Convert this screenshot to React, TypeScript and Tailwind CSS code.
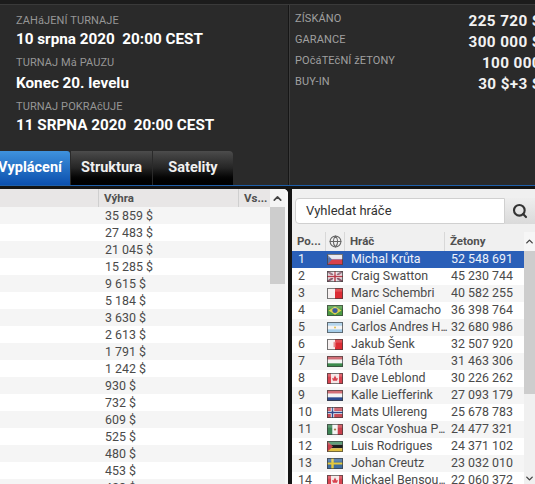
import { Globe, Search, ChevronUp, ChevronDown } from "lucide-react";
import type { ReactNode } from "react";

const prizes = ["35 859 $","27 483 $","21 045 $","15 285 $","9 615 $","5 184 $","3 630 $","2 613 $","1 791 $","1 242 $","930 $","732 $","609 $","525 $","480 $","453 $","428 $"];

function Frame({ children }: { children: ReactNode }) {
  return (
    <svg width="16" height="11" viewBox="0 0 16 12" preserveAspectRatio="none" className="block">
      {children}
      <rect x="0" y="0" width="16" height="4" fill="#ffffff" opacity="0.18" />
      <rect x="0.5" y="0.5" width="15" height="11" fill="none" stroke="#3a3a3a" strokeOpacity="0.7" />
    </svg>
  );
}

const flags: Record<string, ReactNode> = {
  cz: <Frame><rect width="16" height="6" fill="#e4e4ee" /><rect y="6" width="16" height="6" fill="#d8404c" /><path d="M0 0L5 6L0 12Z" fill="#5a74aa" /></Frame>,
  gb: <Frame><rect width="16" height="12" fill="#d8d0d6" /><path d="M0 0L16 12M16 0L0 12" stroke="#8a5a6c" strokeWidth="2" /><path d="M8 0V12M0 6H16" stroke="#f4eef0" strokeWidth="3.4" /><path d="M8 0V12M0 6H16" stroke="#b83c4c" strokeWidth="1.5" /></Frame>,
  mt: <Frame><rect width="16" height="12" fill="#f6f0f0" /><rect x="8" width="8" height="12" fill="#dc2c34" /></Frame>,
  br: <Frame><rect width="16" height="12" fill="#4c9a44" /><path d="M8 1.5L14.5 6L8 10.5L1.5 6Z" fill="#e0d050" /><circle cx="8" cy="6" r="2.6" fill="#3c5c9c" /></Frame>,
  ar: <Frame><rect width="16" height="12" fill="#f4f4f4" /><rect width="16" height="4" fill="#a4cce8" /><rect y="8" width="16" height="4" fill="#a4cce8" /><circle cx="8" cy="6" r="1" fill="#e0c050" /></Frame>,
  pe: <Frame><rect width="16" height="12" fill="#f6f0f0" /><rect x="8" width="8" height="12" fill="#dc2c34" /><rect x="6.5" y="3" width="2" height="6" fill="#e88a8a" /></Frame>,
  hu: <Frame><rect width="16" height="4" fill="#c8505a" /><rect y="4" width="16" height="4" fill="#f4f4f4" /><rect y="8" width="16" height="4" fill="#3c8a4c" /></Frame>,
  ca: <Frame><rect width="16" height="12" fill="#f4e6e6" /><rect width="4" height="12" fill="#d84450" /><rect x="12" width="4" height="12" fill="#d84450" /><path d="M8 2.5L9.5 6L11 5.5L10 8.5H6L5 5.5L6.5 6Z" fill="#d84450" /></Frame>,
  nl: <Frame><rect width="16" height="4" fill="#c8505a" /><rect y="4" width="16" height="4" fill="#f4f4f4" /><rect y="8" width="16" height="4" fill="#2c4a90" /></Frame>,
  no: <Frame><rect width="16" height="12" fill="#c84c58" /><path d="M5.5 0V12M0 6H16" stroke="#f4f4f4" strokeWidth="3.4" /><path d="M5.5 0V12M0 6H16" stroke="#34488c" strokeWidth="1.5" /></Frame>,
  mx: <Frame><rect width="16" height="12" fill="#f4f4f4" /><rect width="5.3" height="12" fill="#3c8454" /><rect x="10.7" width="5.3" height="12" fill="#c8404c" /><circle cx="8" cy="6" r="1.2" fill="#a08050" /></Frame>,
  mz: <Frame><rect width="16" height="4" fill="#3c8a5c" /><rect y="4" width="16" height="4" fill="#1c1c1c" /><rect y="8" width="16" height="4" fill="#e0c040" /><path d="M0 0L6 6L0 12Z" fill="#c8404c" /></Frame>,
  se: <Frame><rect width="16" height="12" fill="#3c6ca0" /><path d="M5.5 0V12M0 6H16" stroke="#e4c83c" strokeWidth="2.4" /></Frame>,
};

const players: [string, string, string, boolean?][] = [
  ["Michal Krůta","cz","52 548 691"],
  ["Craig Swatton","gb","45 230 744"],
  ["Marc Schembri","mt","40 582 255"],
  ["Daniel Camacho","br","36 398 764"],
  ["Carlos Andres H","ar","32 680 986",true],
  ["Jakub Šenk","pe","32 507 920"],
  ["Béla Tóth","hu","31 463 306"],
  ["Dave Leblond","ca","30 226 262"],
  ["Kalle Liefferink","nl","27 093 179"],
  ["Mats Ullereng","no","25 678 783"],
  ["Oscar Yoshua P","mx","24 477 321",true],
  ["Luis Rodrigues","mz","24 371 102"],
  ["Johan Creutz","se","23 032 010"],
  ["Mickael Bensou","ca","22 060 372",true],
];

function Label({ children }: { children: ReactNode }) {
  return <div className="h-[19px] text-[11px] font-normal leading-[19px] tracking-[0.1px] text-[#969696]">{children}</div>;
}

function Stat({ label, value }: { label: string; value: string }) {
  return (
    <div className="flex h-[21px] items-center justify-between">
      <span className="pb-[4px] text-[11px] tracking-[0.1px] text-[#a0a0a0]">{label}</span>
      <span className="text-[15.25px] font-bold tracking-[0.4px] text-[#f2f2f2]">{value}</span>
    </div>
  );
}

export default function App() {
  return (
    <div className="flex h-[484px] w-[535px] flex-col overflow-hidden bg-[#141414] font-['Roboto',sans-serif]">
      <div className="h-[4px] shrink-0 bg-[#1c1c1c]" />
      <div className="flex h-[181px] shrink-0 border-t border-[#3a3a3a] bg-[#2a2a2a]">
        <div className="flex w-[289px] shrink-0 flex-col justify-between border-r border-[#161616]">
          <div className="flex flex-col pl-[16px] pt-[6px] text-[15.25px] font-bold text-white">
            <Label>ZAHáJENÍ TURNAJE</Label>
            <div className="mb-[4px] whitespace-pre leading-[19px]">10 srpna 2020  20:00 CEST</div>
            <Label>TURNAJ Má PAUZU</Label>
            <div className="mb-[2px] whitespace-pre leading-[23px]">Konec 20. levelu</div>
            <Label>TURNAJ POKRAčUJE</Label>
            <div className="whitespace-pre leading-[19px]">11 SRPNA 2020  20:00 CEST</div>
          </div>
          <div className="flex h-[34px] items-stretch text-[14.5px] font-bold text-[#f0f0f0]">
            <div className="flex w-[70px] items-center justify-end overflow-hidden rounded-tr-[3px] bg-gradient-to-b from-[#3f92dc] to-[#0b4fae] pr-[8px] text-white">
              <span className="whitespace-nowrap">Vyplácení</span>
            </div>
            <div className="ml-[1px] flex w-[81px] items-center justify-center bg-gradient-to-b from-[#4c4c4c] via-[#252525] to-[#000000]">Struktura</div>
            <div className="ml-[1px] flex w-[80px] items-center justify-center rounded-tr-[4px] bg-gradient-to-b from-[#4c4c4c] via-[#252525] to-[#000000]">Satelity</div>
          </div>
        </div>
        <div className="min-w-0 flex-1 overflow-hidden border-l border-[#3c3c3c] pt-[6px]">
          <div className="ml-[5px] mr-[-6px] flex flex-col">
            <Stat label="ZÍSKÁNO" value="225 720 $" />
            <Stat label="GARANCE" value="300 000 $" />
            <Stat label="POčáTEčNÍ žETONY" value="100 000" />
            <Stat label="BUY-IN" value="30 $+3 $" />
          </div>
        </div>
      </div>
      <div className="h-[1px] shrink-0 bg-[#1f5fa8]" />
      <div className="flex min-h-0 flex-1 pt-[3px]">
        {/* Left table */}
        <div className="flex w-[288px] shrink-0 overflow-hidden rounded-tr-[5px] bg-white">
          <div className="min-w-0 flex-1 text-[#4a4a4a]">
            <div className="flex h-[18px] items-center bg-[#e8e6e6] text-[11.5px] font-bold text-[#505050]">
              <div className="w-[98px] shrink-0" />
              <div className="h-full flex-1 border-l border-[#cfcfcf] pl-[5px] leading-[18px]">Výhra</div>
              <div className="h-full w-[32px] shrink-0 border-l border-[#cfcfcf] pl-[5px] leading-[18px]">Vs...</div>
            </div>
            {prizes.map((p, i) => (
              <div key={p} className={`h-[17px] pl-[105px] text-[12.4px] leading-[17px] ${i % 2 === 0 ? "bg-[#f5f5f5]" : "bg-white"}`}>{p}</div>
            ))}
          </div>
          <div className="flex w-[18px] shrink-0 flex-col border-r-[3px] border-[#f8f8f8] bg-[#f0f0f0]">
            <div className="flex h-[18px] items-center justify-center bg-[#f4f4f4]"><ChevronUp size={13} strokeWidth={3} color="#444" /></div>
            <div className="h-[77px] bg-[#cdcdcd]" />
          </div>
        </div>
        <div className="w-[4px] shrink-0" />
        {/* Right panel */}
        <div className="flex min-w-0 flex-1 flex-col bg-[#f0f0f0]">
          <div className="mt-[9px] flex h-[26px] shrink-0 pl-[3px]">
            <div className="flex flex-1 items-center rounded-l-[4px] border border-[#d0d0d0] bg-white pl-[10px] text-[13px] text-[#333]">Vyhledat hráče</div>
            <div className="flex w-[30px] shrink-0 items-center justify-center bg-gradient-to-b from-[#eeeeee] to-[#dadada]"><Search size={16} strokeWidth={3.2} color="#333" /></div>
          </div>
          <div className="flex min-h-0 flex-1 pt-[8px]">
            <div className="min-w-0 flex-1">
              <div className="flex h-[19px] items-center text-[11.5px] font-bold text-[#505050]">
                <div className="w-[33px] shrink-0 pl-[5px]">Po...</div>
                <div className="flex h-full w-[20px] shrink-0 items-center justify-center border-x border-[#d8d8d8]"><Globe size={13} color="#666" /></div>
                <div className="h-full w-[100px] shrink-0 border-r border-[#d8d8d8] pl-[5px] leading-[19px]">Hráč</div>
                <div className="pl-[5px]">Žetony</div>
              </div>
              {players.map((p, i) => {
                const sel = i === 0;
                const bg = sel ? "bg-[#2a5fb8] text-[#eef2fa]" : i % 2 === 0 ? "bg-[#f5f5f5] text-[#4a4a4a]" : "bg-white text-[#4a4a4a]";
                return (
                  <div key={p[0]} className={`flex h-[17px] items-center text-[12.4px] ${bg}`}>
                    <div className="w-[35px] shrink-0 pl-[6px]">{i + 1}</div>
                    <div className="w-[24px] shrink-0">{flags[p[1]]}</div>
                    <div className="w-[100px] shrink-0 overflow-hidden whitespace-nowrap">
                      {p[0]}
                      {p[3] ? <span className="tracking-[-1.2px]">...</span> : null}
                    </div>
                    <div className="whitespace-nowrap">{p[2]}</div>
                  </div>
                );
              })}
            </div>
            <div className="flex w-[11px] shrink-0 flex-col justify-between bg-[#f0f0f0]">
              <div>
                <div className="flex h-[19px] items-center justify-center bg-[#f6f6f6]"><ChevronUp size={11} strokeWidth={3} color="#444" /></div>
                <div className="h-[143px] bg-[#cdcdcd]" />
              </div>
              <div className="flex h-[11px] items-center justify-center"><ChevronDown size={11} strokeWidth={3} color="#444" /></div>
            </div>
          </div>
        </div>
      </div>
    </div>
  );
}
